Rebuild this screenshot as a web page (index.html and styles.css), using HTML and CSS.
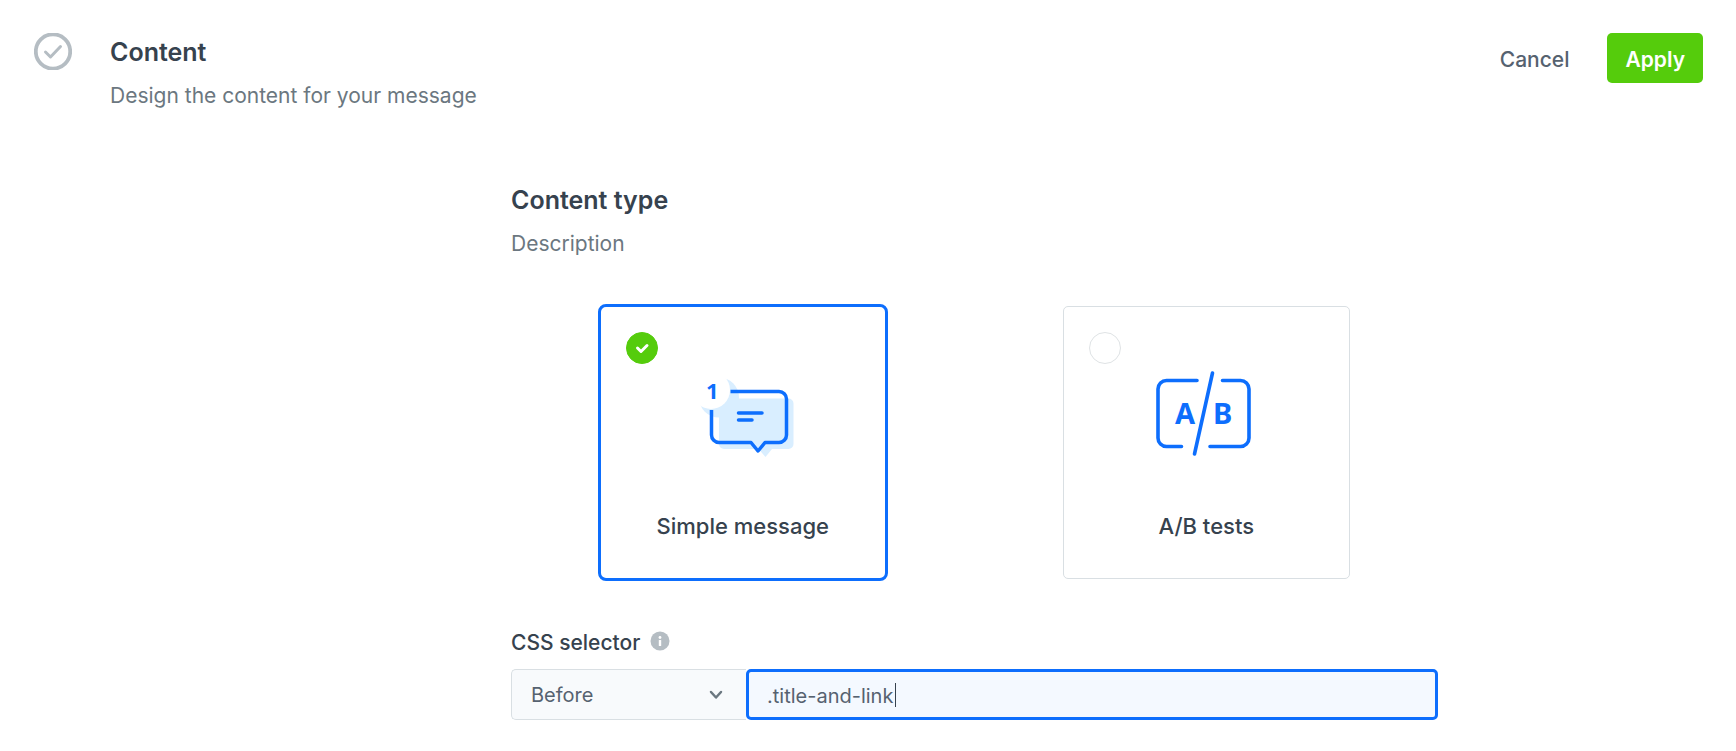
FILE: index.html
```html
<!DOCTYPE html>
<html lang="en">

<head>
    <meta charset="UTF-8">
    <meta name="viewport" content="width=device-width, initial-scale=1.0">
    <title>Content</title>
    <link rel="stylesheet" href="styles.css">
</head>

<body>
    <header class="step-header">
        <svg class="step-icon" width="38" height="37" viewBox="0 0 38 37" fill="none" stroke="#b5bdc3">
            <circle cx="19" cy="18.500" r="17.200" stroke-width="3.800"/>
            <path d="M11.500 19l5 5 10-10.500" stroke-width="3" stroke-linecap="round" stroke-linejoin="round"/>
        </svg>
        <div class="step-text">
            <h1 class="heading">Content</h1>
            <p class="subtitle">Design the content for your message</p>
        </div>
        <div class="actions">
            <button class="btn btn-cancel" type="button">Cancel</button>
            <button class="btn btn-apply" type="button">Apply</button>
        </div>
    </header>

    <main class="step-body">
        <form class="content-form">
            <h2 class="heading">Content type</h2>
            <p class="subtitle">Description</p>

            <div class="card-grid">
                <label class="card card-selected">
                    <span class="card-check">
                        <input class="card-radio" type="radio" name="type" value="simple" checked>
                        <svg class="check-mark" width="32" height="32" viewBox="0 0 32 32" fill="none" stroke="#fff" stroke-width="3" stroke-linecap="round" stroke-linejoin="round">
                            <path d="M11.500 16l3.500 3.500 6-6"/>
                        </svg>
                    </span>
                    <svg class="card-icon" width="100" height="92" viewBox="0 0 100 92" fill="none">
                        <!-- shadow -->
                        <circle cx="26" cy="29.500" r="20" fill="#d9eeff"/>
                        <path d="M26 30.500h69.500a5 5 0 0 1 5 5V76a5 5 0 0 1-5 5H79l-6.500 8-7-8H31a5 5 0 0 1-5-5z" fill="#d9eeff"/>
                        <!-- bubble -->
                        <circle cx="18" cy="22" r="19" fill="#fff"/>
                        <path d="M37.500 23.500H86a7.500 7.500 0 0 1 7.500 7.500V67a7.500 7.500 0 0 1-7.500 7.500H72L65 83l-7-8.500H26A7.500 7.500 0 0 1 18.500 67V42" stroke="#0d6efd" stroke-width="3.500" stroke-linejoin="round"/>
                        <path d="M45.500 45H69M45.500 52H59" stroke="#0d6efd" stroke-width="3.500" stroke-linecap="round"/>
                        <text class="icon-letter" x="13" y="31" font-size="22">1</text>
                    </svg>
                    <span class="card-title">Simple message</span>
                </label>

                <label class="card">
                    <span class="card-check">
                        <input class="card-radio" type="radio" name="type" value="ab">
                    </span>
                    <svg class="card-icon" width="100" height="92" viewBox="0 0 100 92" fill="none" stroke="#0d6efd" stroke-width="3.600" stroke-linecap="round">
                        <path d="M41 12.500H10.500a8.500 8.500 0 0 0-8.500 8.500v49a8.500 8.500 0 0 0 8.500 8.500H25.500"/>
                        <path d="M66.500 12.500H84.500a8.500 8.500 0 0 1 8.500 8.500v49a8.500 8.500 0 0 1-8.500 8.500H54"/>
                        <path d="M56.500 5L38.500 86"/>
                        <text class="icon-letter" x="19" y="56" font-size="29">A</text>
                        <text class="icon-letter" x="57" y="56" font-size="29">B</text>
                    </svg>
                    <span class="card-title">A/B tests</span>
                </label>
            </div>

            <div class="label-row">
                <label class="field-label" for="selector">CSS selector</label>
                <svg class="info-icon" width="20" height="20" viewBox="0 0 20 20">
                    <circle cx="10" cy="10" r="9.500" fill="#b5bdc3"/>
                    <circle cx="10" cy="6.500" r="1.400" fill="#fff"/>
                    <rect x="8.800" y="9" width="2.400" height="6" rx="0.500" fill="#fff"/>
                </svg>
            </div>
            <div class="selector-row">
                <div class="select-wrap">
                    <select class="position-select" aria-label="Position">
                        <option>Before</option>
                        <option>After</option>
                    </select>
                    <svg class="chevron" width="14" height="10" viewBox="0 0 14 10" fill="none" stroke="#6b7780" stroke-width="2.500" stroke-linecap="round" stroke-linejoin="round">
                        <path d="M2 2l5 5.500L12 2"/>
                    </svg>
                </div>
                <div class="input-wrap">
                    <input class="selector-input" id="selector" type="text" value=".title-and-link">
                    <span class="caret"></span>
                </div>
            </div>
        </form>
    </main>
</body>

</html>
```
FILE: styles.css
```css
* {
    box-sizing: border-box;
}

body {
    margin: 0;
    background: #fff;
    color: #36424e;
    font-family: Inter, "Liberation Sans", sans-serif;
    font-size: 21px;
    line-height: 28px;
}

.step-header {
    display: flex;
    align-items: flex-start;
    padding: 33px 33px 0 34px;
}

.step-text {
    flex: 1;
    margin-left: 38px;
}

.heading {
    margin: 0;
    font-size: 25px;
    font-weight: 600;
    line-height: 38px;
}

.subtitle {
    margin: 11px 0 0;
    color: #6b7780;
}

.actions {
    display: flex;
    gap: 20px;
}

.btn {
    height: 50px;
    padding: 2px 18px 0;
    border: none;
    border-radius: 5px;
    background: none;
    color: #566270;
    font-family: inherit;
    font-size: 21px;
    font-weight: 500;
    cursor: pointer;
}

.btn-apply {
    background: #55cc0c;
    color: #fff;
    font-weight: 600;
}

.step-body {
    padding: 71px 0 32px 213px;
}

.content-form {
    max-width: 927px;
    margin: 0 auto;
}

.card-grid {
    display: grid;
    grid-template-columns: 1fr 1fr;
    align-items: center;
    justify-items: center;
    margin: 46px 0 48px;
}

.card {
    display: flex;
    flex-direction: column;
    align-items: center;
    width: 287px;
    padding: 25px 25px 38px;
    border: 1px solid #d9dfe3;
    border-radius: 5px;
    cursor: pointer;
}

.card-selected {
    width: 290px;
    border: 3px solid #0d6efd;
    border-radius: 8px;
}

.card-check {
    position: relative;
    align-self: flex-start;
    width: 32px;
    height: 32px;
}

.card-radio {
    display: block;
    width: 32px;
    height: 32px;
    margin: 0;
    border: 1px solid #dfe3e5;
    border-radius: 50%;
    appearance: none;
}

.card-radio:checked {
    border-color: #55cc0c;
    background: #55cc0c;
}

.check-mark {
    position: absolute;
    top: 0;
    left: 0;
}

.card-icon {
    margin: 4px 0 52px;
    overflow: visible;
}

.icon-letter {
    fill: #0d6efd;
    stroke: none;
    font-family: "Noto Sans", "Open Sans", sans-serif;
    font-weight: 700;
}

.card-title {
    font-size: 22px;
    font-weight: 500;
}

.label-row {
    display: flex;
    align-items: center;
    gap: 10px;
    margin-bottom: 12px;
}

.field-label {
    font-weight: 500;
}

.info-icon {
    margin-bottom: 4px;
}

.selector-row {
    display: flex;
}

.select-wrap {
    position: relative;
    width: 235px;
}

.position-select {
    width: 100%;
    height: 51px;
    padding: 0 19px;
    border: 1px solid #d9dfe3;
    border-right: none;
    border-radius: 5px 0 0 5px;
    background: #f8fafc;
    color: #566270;
    font-family: inherit;
    font-size: 20px;
    appearance: none;
}

.chevron {
    position: absolute;
    top: 21px;
    right: 23px;
    pointer-events: none;
}

.input-wrap {
    position: relative;
    flex: 1;
}

.selector-input {
    width: 100%;
    height: 51px;
    padding: 2px 18px 0;
    border: 3px solid #0d6efd;
    border-radius: 5px;
    outline: none;
    background: #f4f9ff;
    color: #566270;
    font-family: inherit;
    font-size: 20px;
}

.caret {
    position: absolute;
    top: 14px;
    left: 149px;
    width: 1px;
    height: 24px;
    background: #36424e;
}
```
